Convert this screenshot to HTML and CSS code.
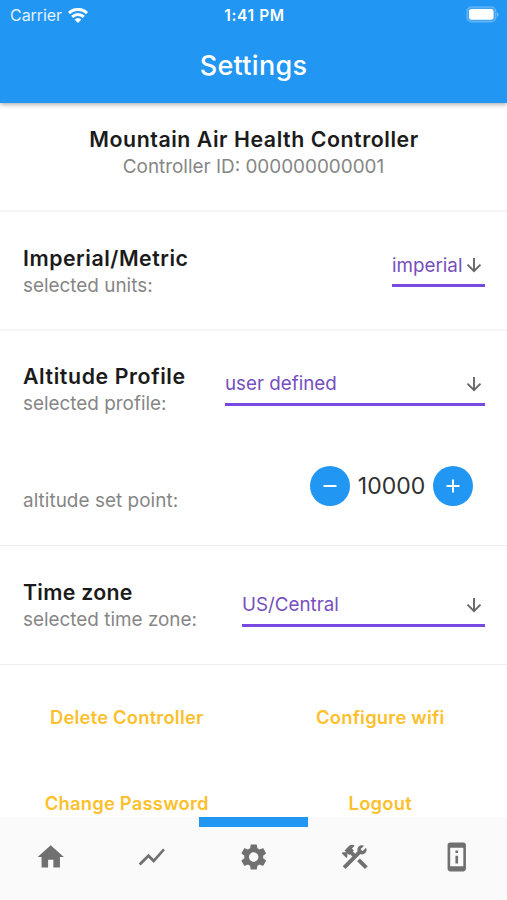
FILE: index.html
```html
<!DOCTYPE html>
<html lang="en">
<head>
<meta charset="utf-8">
<title>Settings</title>
<link rel="stylesheet" href="styles.css">
</head>
<body>
<div class="app">
  <header class="header">
    <div class="status">
      <span class="carrier"><span class="carrier-name">Carrier</span>
        <svg class="wifi" viewBox="0 0 20 15"><g fill="none" stroke="#fff" stroke-width="3"><path d="M1 5.100a13 13 0 0 1 18 0"/><path d="M4.200 8.800a8.400 8.400 0 0 1 11.600 0"/></g><path fill="#fff" d="M6.600 11.600a5 5 0 0 1 6.800 0L10 15z"/></svg>
      </span>
      <span class="clock">1:41 PM</span>
      <span class="power"><svg width="33" height="17" viewBox="0 0 33 17"><rect x=".9" y=".9" width="29" height="15" rx="4.500" fill="#fff" fill-opacity=".15" stroke="#fff" stroke-opacity=".25" stroke-width="1.200"/><rect x="3" y="3" width="24.600" height="10.700" rx="2.600" fill="#fff"/><path d="M31 6v5q1.500-1 1.500-2.500T31 6" fill="#fff" opacity=".4"/></svg></span>
    </div>
    <h1 class="title">Settings</h1>
  </header>
  <main class="content">
    <section class="intro">
      <h2 class="heading h-intro">Mountain Air Health Controller</h2>
      <p class="sub">Controller ID: 000000000001</p>
    </section>
    <section class="row units">
      <div class="labels"><h2 class="heading h-units">Imperial/Metric</h2><p class="sub">selected units:</p></div>
      <div class="select select-units"><span>imperial</span><svg class="arrow" viewBox="0 0 16 16"><path d="M8 1v13M1.500 7.700 8 14.200l6.500-6.500"/></svg></div>
    </section>
    <section class="altitude">
      <div class="row">
        <div class="labels labels-altitude"><h2 class="heading h-altitude">Altitude Profile</h2><p class="sub">selected profile:</p></div>
        <div class="select select-profile"><span>user defined</span><svg class="arrow" viewBox="0 0 16 16"><path d="M8 1v13M1.500 7.700 8 14.200l6.500-6.500"/></svg></div>
      </div>
      <div class="setpoint">
        <p class="sub s-point">altitude set point:</p>
        <div class="stepper">
          <button class="round" aria-label="Decrease"><svg width="14" height="14" viewBox="0 0 14 14"><path d="M.5 7h13"/></svg></button>
          <span class="amount">10000</span>
          <button class="round" aria-label="Increase"><svg width="14" height="14" viewBox="0 0 14 14"><path d="M.5 7h13M7 .5v13"/></svg></button>
        </div>
      </div>
    </section>
    <section class="row zone">
      <div class="labels"><h2 class="heading h-zone">Time zone</h2><p class="sub">selected time zone:</p></div>
      <div class="select select-zone"><span>US/Central</span><svg class="arrow" viewBox="0 0 16 16"><path d="M8 1v13M1.500 7.700 8 14.200l6.500-6.500"/></svg></div>
    </section>
    <section class="actions">
      <button class="action">Delete Controller</button>
      <button class="action">Configure wifi</button>
      <button class="action">Change Password</button>
      <button class="action">Logout</button>
    </section>
  </main>
  <nav class="tabs">
    <a class="tab"><svg viewBox="0 0 24 24"><path d="M10 20v-6h4v6h5v-8h3L12 3 2 12h3v8z"/></svg></a>
    <a class="tab"><svg viewBox="0 0 24 24"><path d="M3.500 18.490l6-6.010 4 4L22 6.920l-1.410-1.410-7.090 7.970-4-4L2 16.990z"/></svg></a>
    <a class="tab active"><svg viewBox="0 0 24 24"><path d="M19.140 12.940c.04-.3.06-.61.06-.94 0-.32-.02-.64-.07-.94l2.030-1.580c.18-.14.23-.41.12-.61l-1.920-3.320c-.12-.22-.37-.29-.59-.22l-2.390.96c-.5-.38-1.030-.7-1.620-.94l-.36-2.540c-.04-.24-.24-.41-.48-.41h-3.840c-.24 0-.43.17-.47.41l-.36 2.540c-.59.24-1.130.57-1.620.94l-2.390-.96c-.22-.08-.47 0-.59.22L2.740 8.870c-.12.21-.08.47.12.61l2.030 1.580c-.05.3-.09.63-.09.94s.02.64.07.94l-2.030 1.580c-.18.14-.23.41-.12.61l1.920 3.320c.12.22.37.29.59.22l2.390-.96c.5.38 1.030.7 1.620.94l.36 2.540c.05.24.24.41.48.41h3.840c.24 0 .44-.17.47-.41l.36-2.540c.59-.24 1.130-.56 1.620-.94l2.390.96c.22.08.47 0 .59-.22l1.920-3.320c.12-.22.07-.47-.12-.61l-2.010-1.580zM12 15.600c-1.980 0-3.600-1.620-3.600-3.600s1.620-3.600 3.600-3.600 3.600 1.620 3.600 3.600-1.620 3.600-3.600 3.600z"/></svg></a>
    <a class="tab"><svg viewBox="0 0 24 24"><path d="M13.783 15.172l2.121-2.121 5.996 5.996-2.121 2.121z"/><path d="M17.500 10c1.930 0 3.500-1.570 3.500-3.500 0-.58-.16-1.120-.41-1.600l-2.700 2.700L16.400 6.110l2.700-2.700C18.620 3.160 18.080 3 17.500 3 15.570 3 14 4.570 14 6.500c0 .41.08.8.21 1.160l-1.850 1.850-1.780-1.780.71-.71-1.410-1.410L12 3.490c-1.170-1.170-3.070-1.170-4.240 0L4.220 7.030l1.410 1.410H2.810L2.100 9.150l3.540 3.540.71-.71V9.150l1.410 1.410.71-.71 1.780 1.780-7.410 7.410 2.120 2.120L16.340 9.790c.36.13.75.21 1.160.21z"/></svg></a>
    <a class="tab"><svg viewBox="0 0 24 24"><path d="M13 7h-2v2h2V7zm0 4h-2v6h2v-6zm4-9.990L7 1c-1.100 0-2 .9-2 2v18c0 1.100.9 2 2 2h10c1.100 0 2-.9 2-2V3c0-1.100-.9-1.990-2-1.990zM17 19H7V5h10v14z"/></svg></a>
  </nav>
</div>
</body>
</html>
```
FILE: styles.css
```css
* { box-sizing: border-box; }
body { margin: 0; background: #fff; font-family: Inter, "Liberation Sans", sans-serif; }
h1, h2, p { margin: 0; }
button { border: 0; padding: 0; background: none; font: inherit; }
svg { display: block; flex: none; }

.app { width: 507px; height: 900px; display: flex; flex-direction: column; overflow: hidden; }

.header { height: 103px; flex: none; background: #2196f3; color: #fff; box-shadow: 0 1px 5px rgba(0, 0, 0, .4); z-index: 1; }
.status { display: grid; grid-template-columns: 1fr auto 1fr; align-items: center; height: 30px; padding: 0 8px 0 10px; font-size: 16px; }
.carrier { display: flex; align-items: center; gap: 6px; color: #e3f2fd; }
.carrier-name { letter-spacing: -.05px; }
.wifi { width: 20px; height: 15px; }
.clock { font-size: 15.500px; font-weight: 600; letter-spacing: .6px; }
.power { justify-self: end; padding-bottom: 1px; }
.title { font-size: 27px; line-height: 36px; margin-top: 18px; font-weight: 500; text-align: center; letter-spacing: .3px; }

.content { height: 714px; flex: none; overflow: hidden; }
.heading { font-size: 21.300px; line-height: 28px; font-weight: 600; color: #1b1b1b; white-space: nowrap; }
.h-intro { letter-spacing: .56px; padding-left: 1px; }
.h-units { letter-spacing: .54px; }
.h-altitude { letter-spacing: .6px; }
.h-zone { letter-spacing: .3px; }
.sub { font-size: 18.900px; line-height: 26px; margin-top: 1px; color: #868686; white-space: nowrap; }

.intro { height: 109px; padding-top: 22px; text-align: center; border-bottom: 2px solid #f5f5f5; }
.row { display: flex; justify-content: space-between; padding: 32px 22px 0 23px; }
.units, .zone { height: 119px; }
.units { border-bottom: 2px solid #f5f5f5; }
.zone, .altitude { border-bottom: 1px solid #eee; }
.altitude { height: 215px; }
.labels-altitude { margin-top: -1px; }

.select { display: flex; justify-content: space-between; align-items: center; height: 43px; border-bottom: 3px solid #7748e2; color: #7650bd; font-size: 18.800px; white-space: nowrap; }
.select-units { width: 93px; padding-top: 2px; }
.select-profile { width: 260px; padding-top: 1px; }
.select-zone { width: 243px; margin-top: 6px; padding-top: 1px; }
.arrow { width: 16px; height: 16px; margin-right: 3px; fill: none; stroke: #666; stroke-width: 1.900; }

.setpoint { display: flex; justify-content: space-between; padding: 48px 34px 0 23px; }
.s-point { padding-top: 22px; letter-spacing: .05px; }
.stepper { display: flex; align-items: center; justify-content: space-between; width: 163px; height: 41px; }
.round { width: 40px; height: 40px; border-radius: 50%; background: #2196f3; display: grid; place-items: center; }
.round path { stroke: #fff; stroke-width: 2; }
.amount { font-size: 23px; color: #303030; padding-top: 1px; }

.actions { display: grid; grid-template-columns: 1fr 1fr; grid-auto-rows: 86px; padding-top: 9px; }
.action { color: #fcc02d; font-size: 18.400px; font-weight: 600; letter-spacing: .2px; white-space: nowrap; }

.tabs { flex: 1; display: grid; grid-template-columns: repeat(5, minmax(0, 1fr)); background: #fafafa; }
.tab { display: flex; justify-content: center; padding-top: 24px; }
.tab svg { width: 31.500px; height: 32px; fill: #707070; }
.active { width: 109px; justify-self: center; border-top: 10px solid #2196f3; padding-top: 14px; }
```
